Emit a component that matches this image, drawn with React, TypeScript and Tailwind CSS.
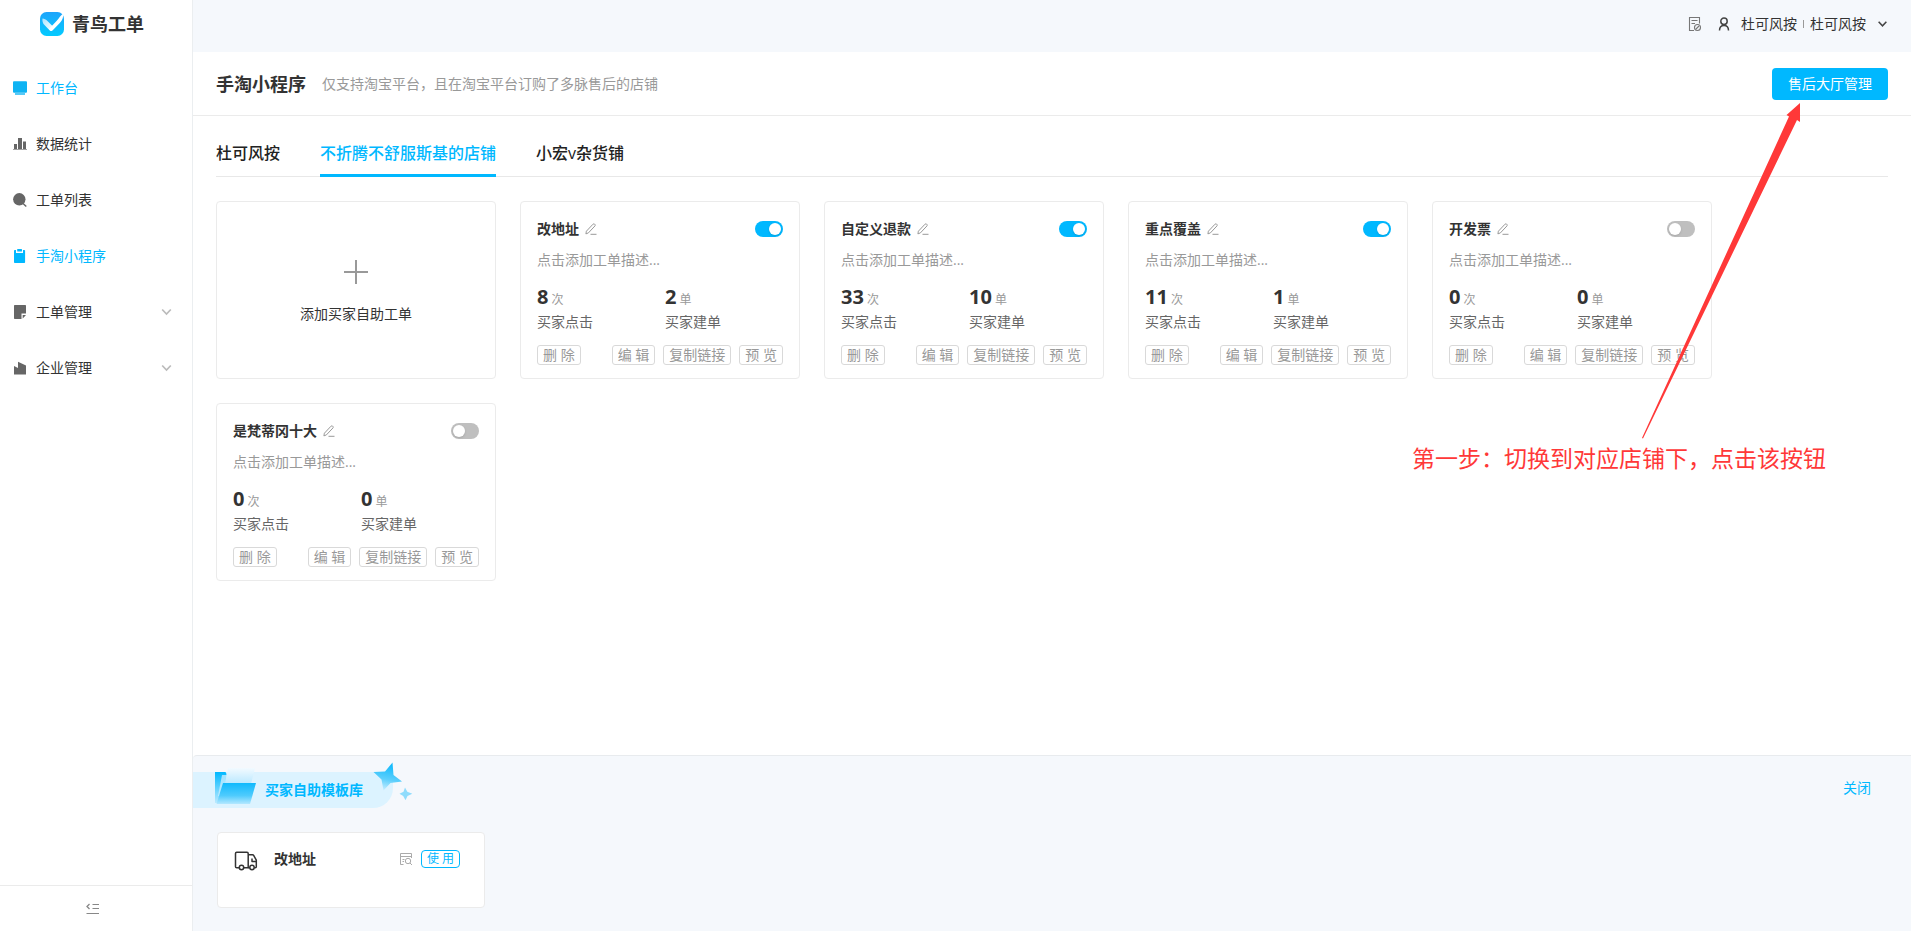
import React, { useState } from 'react';

interface Ticket {
  name: string;
  clicks: number;
  orders: number;
  enabled: boolean;
}

const TICKETS: Ticket[] = [
  { name: '改地址', clicks: 8, orders: 2, enabled: true },
  { name: '自定义退款', clicks: 33, orders: 10, enabled: true },
  { name: '重点覆盖', clicks: 11, orders: 1, enabled: true },
  { name: '开发票', clicks: 0, orders: 0, enabled: false },
  { name: '是梵蒂冈十大', clicks: 0, orders: 0, enabled: false },
];

const SHOPS = ['杜可风按', '不折腾不舒服斯基的店铺', '小宏v杂货铺'];

const NAV = [
  { label: '工作台', icon: <DeskIcon />, active: true, children: false },
  { label: '数据统计', icon: <ChartIcon />, active: false, children: false },
  { label: '工单列表', icon: <SearchIcon />, active: false, children: false },
  { label: '手淘小程序', icon: <ClipboardIcon />, active: true, children: false },
  { label: '工单管理', icon: <NoteIcon />, active: false, children: true },
  { label: '企业管理', icon: <FactoryIcon />, active: false, children: true },
];

/* ---------- icons ---------- */

function DeskIcon() {
  return (
    <svg width="14" height="14" viewBox="0 0 14 14" fill="#0fb3f3">
      <rect x="0" y="0.3" width="14" height="11.4" rx="1" />
      <rect x="2" y="12.3" width="10" height="1.4" />
    </svg>
  );
}

function ChartIcon() {
  return (
    <svg width="14" height="14" viewBox="0 0 14 14" fill="#666">
      <rect x="1" y="7" width="3" height="5" />
      <rect x="5" y="1" width="4" height="11" />
      <rect x="10" y="4.5" width="3" height="7.5" />
      <rect x="0" y="12" width="14" height="1" opacity="0.6" />
    </svg>
  );
}

function SearchIcon() {
  return (
    <svg width="14" height="14" viewBox="0 0 14 14" fill="#666">
      <circle cx="6.3" cy="6.3" r="6.2" />
      <path d="M10 10.5l3.3 3" stroke="#666" strokeWidth="1.4" />
    </svg>
  );
}

function ClipboardIcon() {
  return (
    <svg width="14" height="14" viewBox="0 0 14 14" fill="#00b8ff">
      <path d="M1.8 1H3v2.9h7V1h1.3c.5 0 .8.3.8.8v11.4c0 .5-.3.8-.8.8H1.8c-.5 0-.8-.3-.8-.8V1.8c0-.5.3-.8.8-.8z" />
      <rect x="4.2" y="0" width="4.8" height="2.6" rx="0.5" />
    </svg>
  );
}

function NoteIcon() {
  return (
    <svg width="14" height="14" viewBox="0 0 14 14" fill="#666">
      <path d="M1.7 0h10.6c.4 0 .7.3.7.7V8.5H8.5V14H1.7c-.4 0-.7-.3-.7-.7V.7c0-.4.3-.7.7-.7z" />
      <path d="M9.7 13.6V9.9h3.3z" />
    </svg>
  );
}

function FactoryIcon() {
  return (
    <svg width="14" height="14" viewBox="0 0 14 14" fill="#666">
      <path d="M1 5l4 2V.8L13 4.5V13.5H1z" />
    </svg>
  );
}

function Chevron({ color, width }: { color: string; width: number }) {
  return (
    <svg width={width} height="8" viewBox="0 0 10 8" fill="none" stroke={color} strokeWidth="1.7">
      <path d="M0.7 1.5L5 6l4.300-4.500" />
    </svg>
  );
}

function PencilIcon() {
  return (
    <svg width="12" height="12" viewBox="0 0 12 12" fill="none" stroke="#999" strokeWidth="1">
      <path d="M0.9 10.9l.5-2.7L8 1.2c.5-.5 1.200-.5 1.600-.1l.3.3c.5.5.4 1.100 0 1.600L3.400 9.900z" />
      <path d="M5.500 11.300H11.500" />
    </svg>
  );
}

function LogoIcon() {
  return (
    <svg width="24" height="24" viewBox="0 0 24 24">
      <defs>
        <linearGradient id="logo-bg" x1="0" y1="0" x2="0" y2="1">
          <stop offset="0" stopColor="#1ea4fb" />
          <stop offset="1" stopColor="#03cbff" />
        </linearGradient>
        <linearGradient id="logo-wing" x1="0" y1="0" x2="1" y2="1">
          <stop offset="0" stopColor="#fff" stopOpacity="0.65" />
          <stop offset="1" stopColor="#fff" />
        </linearGradient>
      </defs>
      <rect width="24" height="24" rx="6.5" fill="url(#logo-bg)" />
      <path d="M2.500 6.500c1.500 0 3.500.8 5.200 2.700L14 15.500l-2.500 3.200c-.5.5-1 .5-1.500 0L4 12.500c-1.400-1.700-1.900-4-1.500-6z" fill="url(#logo-wing)" />
      <path d="M23.500 1.500c-.2 3.500-1 6.500-3.500 9.300l-7.500 7.700c-.5.5-1.200.6-1.800.2l-1.700-1.700L17 8.500c2-2.500 3.500-5 6.500-7z" fill="#fff" />
    </svg>
  );
}

function DocCheckIcon() {
  return (
    <svg width="14" height="16" viewBox="0 0 14 16" fill="none" stroke="#777" strokeWidth="1.1">
      <path d="M6 14.500H1.500V1.500H11.500V7.500" />
      <path d="M3.500 4.500h6M3.500 7.500h3.500" />
      <circle cx="9.500" cy="11.500" r="3" />
      <path d="M8 13l3-3" />
    </svg>
  );
}

function UserIcon() {
  return (
    <svg width="12" height="14" viewBox="0 0 12 14" fill="none" stroke="#444" strokeWidth="1.5">
      <circle cx="6" cy="4.200" r="3.200" />
      <path d="M1.500 13.500c0-3.500 1.700-5 4.500-5s4.500 1.500 4.500 5" />
    </svg>
  );
}

function PreviewIcon() {
  return (
    <svg width="14" height="14" viewBox="0 0 14 14" fill="none" stroke="#aaa" strokeWidth="1">
      <path d="M4.500 12.500H1.500V1.500H12.500V6" />
      <path d="M1.500 4.500h11M3.500 7.500h2M3.500 9.500h1.500" />
      <circle cx="9" cy="9" r="2.700" />
      <path d="M11 11l2 2" />
    </svg>
  );
}

function TruckIcon() {
  return (
    <svg width="24" height="20" viewBox="0 0 24 20" fill="none" stroke="#333" strokeWidth="1.5" strokeLinejoin="round">
      <path d="M5 16.800H2.700C1.900 16.800 1.500 16.400 1.500 15.800V2.500C1.500 1.800 1.900 1.300 2.700 1.300H13c.7 0 1.200.5 1.200 1.200V16.800H10" />
      <path d="M14.200 3.800h4.300c.6 0 1 .3 1.300.8l2.500 4.600V15.800c0 .6-.4 1-1 1h-1M14.200 16.800h1.500" />
      <path d="M18 7.500v3h4.300" />
      <circle cx="7.500" cy="16.500" r="2.200" />
      <circle cx="18" cy="16.500" r="2.200" />
    </svg>
  );
}

function FoldIcon() {
  return (
    <svg width="14" height="14" viewBox="0 0 14 14" fill="none" stroke="#888">
      <path d="M6.500 2.500H13M6.500 6.500H13M0.500 11.500H13" strokeWidth="1.2" />
      <path d="M3.500 2L1 4.500 3.500 7" strokeWidth="1.3" />
    </svg>
  );
}

function FolderIcon() {
  return (
    <svg width="42" height="36" viewBox="0 0 42 36">
      <defs>
        <linearGradient id="folder-back" x1="0" y1="0" x2="0" y2="1">
          <stop offset="0" stopColor="#00b8ff" />
          <stop offset="1" stopColor="#00b8ff" stopOpacity="0.15" />
        </linearGradient>
        <linearGradient id="folder-paper" x1="0" y1="0" x2="0" y2="1">
          <stop offset="0" stopColor="#f2faff" />
          <stop offset="1" stopColor="#b9e8ff" />
        </linearGradient>
        <linearGradient id="folder-front" x1="0" y1="0" x2="0" y2="1">
          <stop offset="0" stopColor="#0fb9fd" />
          <stop offset="0.6" stopColor="#4fcbfd" />
          <stop offset="1" stopColor="#b4e8ff" />
        </linearGradient>
      </defs>
      <path d="M0 4h10.500l1 2V35H0z" fill="url(#folder-back)" />
      <path d="M7 7h29L32 28H3z" fill="#c4ecff" opacity="0.8" />
      <path d="M13 0h27l-4 16H10z" fill="url(#folder-paper)" />
      <path d="M8 15H41L35 36H1.500z" fill="url(#folder-front)" />
    </svg>
  );
}

function StarsIcon() {
  return (
    <svg width="40" height="38" viewBox="0 0 40 38">
      <defs>
        <linearGradient id="star-fill" x1="0.6" y1="0" x2="0.4" y2="1">
          <stop offset="0.1" stopColor="#16bbfc" />
          <stop offset="0.6" stopColor="#5ccffc" />
          <stop offset="1" stopColor="#c9eeff" />
        </linearGradient>
      </defs>
      <path d="M19.500 0.500L20.500 13 29 19.500 17.500 21 10.500 28.500 8.500 17.500 0.500 10 12 9.500z" fill="url(#star-fill)" />
      <path d="M32 25.500l2.300 4.200 5 2-4.800 2.300-2 4.200-2.300-4.200-3.700-2.300 4-2z" fill="#8fdcfc" />
    </svg>
  );
}

/* ---------- ticket cards ---------- */

function SmallButton({ children }: { children: React.ReactNode }) {
  return (
    <button
      type="button"
      className="h-5 px-[5px] border border-[#d9d9d9] rounded-[3px] bg-white text-sm leading-4 text-[#999] whitespace-pre cursor-pointer"
    >
      {children}
    </button>
  );
}

function Stat({ value, unit, label }: { value: number; unit: string; label: string }) {
  return (
    <div>
      <p className="h-6 flex items-baseline gap-[3px] leading-6">
        <span className="text-xl leading-6 font-bold text-[#333]">{value}</span>
        <span className="text-xs leading-6 text-[#999]">{unit}</span>
      </p>
      <p className="mt-px text-sm leading-6 text-[#666]">{label}</p>
    </div>
  );
}

function TicketCard({ ticket }: { ticket: Ticket }) {
  const [enabled, setEnabled] = useState(ticket.enabled);

  return (
    <article className="w-[280px] h-[178px] px-4 pt-4 border border-[#ebebeb] rounded bg-white">
      <div className="h-[22px] flex items-center justify-between">
        <div className="flex items-center gap-1.5">
          <h3 className="text-sm leading-5 font-bold text-[#333]">{ticket.name}</h3>
          <button type="button" aria-label="编辑名称" className="cursor-pointer">
            <PencilIcon />
          </button>
        </div>
        <input
          type="checkbox"
          role="switch"
          aria-label={ticket.name}
          checked={enabled}
          onChange={(e) => setEnabled(e.target.checked)}
          className="appearance-none w-7 h-4 p-0.5 rounded-full bg-[#bfbfbf] checked:bg-[#00b8ff] cursor-pointer before:block before:size-3 before:rounded-full before:bg-white before:shadow-sm checked:before:translate-x-3"
        />
      </div>
      <p className="mt-2.5 text-sm leading-5 text-[#999]">点击添加工单描述...</p>
      <div className="mt-[15px] grid grid-cols-[128px_1fr]">
        <Stat value={ticket.clicks} unit="次" label="买家点击" />
        <Stat value={ticket.orders} unit="单" label="买家建单" />
      </div>
      <div className="mt-[11px] flex items-center gap-2">
        <div className="flex-1 flex">
          <SmallButton>删 除</SmallButton>
        </div>
        <SmallButton>编 辑</SmallButton>
        <SmallButton>复制链接</SmallButton>
        <SmallButton>预 览</SmallButton>
      </div>
    </article>
  );
}

/* ---------- page ---------- */

function Sidebar() {
  return (
    <aside className="w-[193px] shrink-0 flex flex-col border-r border-[#ebeef0] bg-white">
      <div className="h-12 pl-10 flex items-center gap-2">
        <LogoIcon />
        <h1 className="text-lg leading-6 font-bold text-[#333]">青鸟工单</h1>
      </div>
      <nav className="flex-1 pt-3">
        {NAV.map((item) => (
          <a
            key={item.label}
            href="#"
            className={`h-14 pl-[13px] pr-5 flex items-center gap-[9px] text-sm ${
              item.active ? 'text-[#00b8ff]' : 'text-[#333]'
            }`}
          >
            {item.icon}
            <span className="flex-1">{item.label}</span>
            {item.children && <Chevron color="#bbb" width={11} />}
          </a>
        ))}
      </nav>
      <button
        type="button"
        aria-label="收起菜单"
        className="h-[46px] pr-1.5 border-t border-[#ebebeb] flex items-center justify-center cursor-pointer"
      >
        <FoldIcon />
      </button>
    </aside>
  );
}

function TemplatePanel() {
  return (
    <section className="h-44 shrink-0 border-t border-[#e8ebee] rounded-tl bg-[#f5f8fc]">
      <div className="pt-4 pr-10 flex items-start justify-between">
        <div className="relative w-[200px] h-9 pl-[72px] flex items-center rounded-br-[20px] rounded-tr-lg bg-[#dcf3ff]">
          <span className="absolute left-[22px] -top-1">
            <FolderIcon />
          </span>
          <h2 className="text-sm font-bold text-[#00b8ff]">买家自助模板库</h2>
          <span className="absolute left-[180px] -top-2.5">
            <StarsIcon />
          </span>
        </div>
        <button type="button" className="mt-1.5 text-sm leading-5 text-[#00b8ff] cursor-pointer">
          关闭
        </button>
      </div>
      <article className="mt-6 ml-6 w-[268px] h-[76px] pl-4 pr-6 pt-4 border border-[#ebebeb] rounded bg-white">
        <div className="h-5 flex items-center">
          <span className="pt-1">
            <TruckIcon />
          </span>
          <h3 className="ml-4 flex-1 text-sm leading-5 font-bold text-[#333]">改地址</h3>
          <PreviewIcon />
          <button
            type="button"
            className="ml-2 h-[18px] px-[5px] border border-[#00b8ff] rounded text-xs leading-4 text-[#00b8ff] whitespace-pre cursor-pointer"
          >
            使 用
          </button>
        </div>
      </article>
    </section>
  );
}

export default function App() {
  const [shop, setShop] = useState(SHOPS[1]);

  return (
    <div className="relative min-h-screen flex overflow-hidden bg-white font-['Open_Sans','Noto_Sans_CJK_SC',sans-serif]">
      <Sidebar />

      <div className="flex-1 min-w-0 flex flex-col">
        <header className="h-[52px] pr-6 pb-1 shrink-0 flex items-center justify-end bg-[#f5f8fc] text-sm text-[#333]">
          <button type="button" aria-label="工单记录" className="cursor-pointer">
            <DocCheckIcon />
          </button>
          <button type="button" className="ml-4 flex items-center cursor-pointer">
            <UserIcon />
            <span className="ml-[11px]">杜可风按</span>
            <span className="mx-1.5 w-px h-2 bg-[#999]" />
            <span className="mr-3">杜可风按</span>
            <Chevron color="#444" width={9} />
          </button>
        </header>

        <div className="h-16 px-[23px] shrink-0 flex items-center border-b border-[#ebebeb]">
          <h2 className="text-lg font-bold text-[#333]">手淘小程序</h2>
          <p className="ml-4 flex-1 text-sm text-[#999]">仅支持淘宝平台，且在淘宝平台订购了多脉售后的店铺</p>
          <button type="button" className="h-8 px-4 rounded bg-[#00b8ff] text-sm text-white cursor-pointer">
            售后大厅管理
          </button>
        </div>

        <main className="flex-1 px-[23px] pb-6">
          <div className="h-[61px] pt-4 flex gap-10 border-b border-[#e8e8e8]" role="tablist">
            {SHOPS.map((name) => (
              <button
                key={name}
                type="button"
                role="tab"
                aria-selected={shop === name}
                onClick={() => setShop(name)}
                className={`h-[45px] border-b-[3px] text-base font-medium cursor-pointer ${
                  shop === name ? 'border-[#00b8ff] text-[#00b8ff]' : 'border-transparent text-[#222]'
                }`}
              >
                {name}
              </button>
            ))}
          </div>

          <div className="mt-6 flex flex-wrap gap-6">
            <button
              type="button"
              className="w-[280px] h-[178px] pt-1 flex flex-col items-center justify-center gap-5 border border-[#ebebeb] rounded bg-white text-sm text-[#333] cursor-pointer"
            >
              <svg width="24" height="24" viewBox="0 0 24 24" stroke="#999" strokeWidth="2">
                <path d="M12 0V24M0 12H24" />
              </svg>
              添加买家自助工单
            </button>
            {TICKETS.map((ticket) => (
              <TicketCard key={ticket.name} ticket={ticket} />
            ))}
          </div>
        </main>

        <TemplatePanel />
      </div>

      {/* Guide arrow pointing at the hall button */}
      <div className="absolute top-[102px] right-[84px] w-[415px] pointer-events-none text-[#ff3838]">
        <svg className="ml-[228px]" width="164" height="338" viewBox="0 0 164 338" fill="currentColor">
          <path d="M160 1V20L157 18 3 336.500 2 336 149 14.500 146.500 13z" />
        </svg>
        <p className="text-[23px] leading-9 whitespace-nowrap">第一步：切换到对应店铺下，点击该按钮</p>
      </div>
    </div>
  );
}
